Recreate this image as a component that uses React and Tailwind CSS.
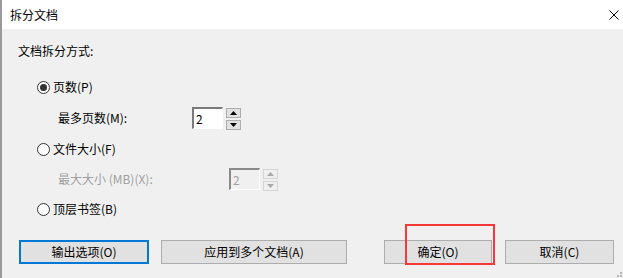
import React from "react";

const font = { fontFamily: '"Noto Sans CJK SC", "Noto Sans", sans-serif' };

function Radio({ checked, label }) {
  return (
    <div className="flex items-center h-[16px] ml-[19px]">
      <div className="w-[13px] h-[13px] rounded-full border border-[#333333] bg-white flex items-center justify-center">
        {checked && <div className="w-[7px] h-[7px] rounded-full bg-[#333333]" />}
      </div>
      <span className="ml-[3px] text-[12px] leading-[16px] text-black">{label}</span>
    </div>
  );
}

function Tri({ up, color }) {
  return (
    <svg width="7" height="4" viewBox="0 0 7 4">
      {up ? (
        <polygon points="0,4 7,4 3.5,0" fill={color} />
      ) : (
        <polygon points="0,0 7,0 3.5,4" fill={color} />
      )}
    </svg>
  );
}

function Spinner({ disabled }) {
  const cls = disabled
    ? "w-[15px] h-[10px] border border-[#d4d4d4] bg-[#efefef] flex items-center justify-center"
    : "w-[15px] h-[10px] border border-[#adadad] bg-[#e1e1e1] flex items-center justify-center";
  const c = disabled ? "#a8a8a8" : "#000000";
  return (
    <div className="flex flex-col gap-[2px] ml-[3px] mt-[1px]">
      <div className={cls}>
        <Tri up color={c} />
      </div>
      <div className={cls}>
        <Tri color={c} />
      </div>
    </div>
  );
}

function Btn({ children, w, focused }) {
  return (
    <div
      className={
        focused
          ? "h-[24px] border-2 border-[#0078d7] bg-[#e1e1e1] flex items-center justify-center text-[12px] text-black"
          : "h-[24px] border border-[#adadad] bg-[#e1e1e1] flex items-center justify-center text-[12px] text-black"
      }
      style={{ width: w }}
    >
      {children}
    </div>
  );
}

export default function App() {
  return (
    <div
      className="relative w-[623px] h-[278px] bg-[#f0f0f0] border-l-2 border-[#9a9a9a] overflow-hidden"
      style={font}
    >
      {/* title bar */}
      <div className="h-[29px] bg-white flex items-center justify-between pl-[8px] pr-[3px]">
        <span className="text-[12px] text-black leading-none">拆分文档</span>
        <svg width="10" height="10" viewBox="0 0 10 10" className="mr-[1px]">
          <path d="M0.5 0.5 L9.5 9.5 M9.5 0.5 L0.5 9.5" stroke="#000" strokeWidth="1" />
        </svg>
      </div>

      <div className="pl-[16px] flex flex-col">
        <div className="mt-[14px] h-[16px] flex items-center text-[12px] text-black">文档拆分方式:</div>

        <div className="mt-[20px]">
          <Radio checked label="页数(P)" />
        </div>

        <div className="mt-[12px] ml-[40px] flex items-start h-[22px]">
          <div className="w-[134px] h-[22px] flex items-center text-[12px] text-black">最多页数(M):</div>
          <div className="w-[31px] h-[22px] bg-white border-t-2 border-l-2 border-[#7a7a7a] border-r border-b border-r-white border-b-white flex items-center pl-[2px] text-[12px] text-black">
            2
          </div>
          <Spinner />
        </div>

        <div className="mt-[12px]">
          <Radio label="文件大小(F)" />
        </div>

        <div className="mt-[11px] ml-[40px] flex items-start h-[22px]">
          <div className="w-[171px] h-[22px] flex items-center text-[12px] text-[#a0a0a0]">最大大小 (MB)(X):</div>
          <div className="w-[31px] h-[22px] bg-[#f0f0f0] border-t-2 border-l-2 border-[#8a8a8a] border-r border-b border-r-white border-b-white flex items-center pl-[2px] text-[12px] text-[#a0a0a0]">
            2
          </div>
          <Spinner disabled />
        </div>

        <div className="mt-[11px]">
          <Radio label="顶层书签(B)" />
        </div>

        <div className="mt-[23px] flex items-center">
          <div className="ml-[1px]">
            <Btn w={130} focused>输出选项(O)</Btn>
          </div>
          <div className="ml-[12px]">
            <Btn w={186}>应用到多个文档(A)</Btn>
          </div>
          <div className="ml-[37px]">
            <Btn w={108}>确定(O)</Btn>
          </div>
          <div className="ml-[13px]">
            <Btn w={109}>取消(C)</Btn>
          </div>
        </div>
      </div>

      {/* red highlight */}
      <div className="absolute left-[403px] top-[224px] w-[90px] h-[41px] border-2 border-[#f53838]" />

      {/* resize grip */}
      <div className="absolute right-[1px] bottom-[1px] flex flex-col items-end gap-[1px]">
        <div className="w-[2px] h-[2px] bg-[#b8b8b8]" />
        <div className="flex gap-[1px]">
          <div className="w-[2px] h-[2px] bg-[#b8b8b8]" />
          <div className="w-[2px] h-[2px] bg-[#b8b8b8]" />
        </div>
      </div>
    </div>
  );
}
